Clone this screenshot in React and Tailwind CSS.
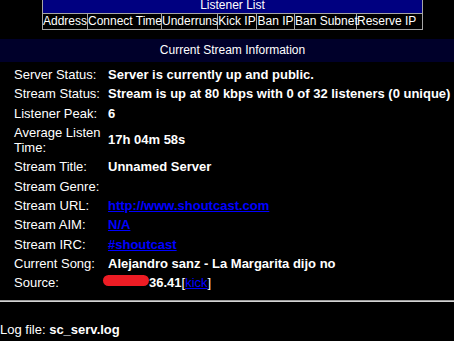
import React from 'react';

const columns = [
  { label: 'Address', w: 'w-[45px]' },
  { label: 'Connect Time', w: 'w-[74px]' },
  { label: 'Underruns', w: 'w-[56px]' },
  { label: 'Kick IP', w: 'w-[39px]' },
  { label: 'Ban IP', w: 'w-[38px]' },
  { label: 'Ban Subnet', w: 'w-[62px]' },
  { label: 'Reserve IP', w: 'w-[59px]' },
];

function Link({ children, bold = true }) {
  return (
    <a href="#" className={`text-[#0000ff] underline ${bold ? 'font-bold' : 'font-normal'}`}>
      {children}
    </a>
  );
}

// one label / value pair of the stream info table
function InfoRow({ label, children }) {
  return (
    <>
      <div className="pt-[2px] pb-[2.33px] pr-1 flex items-center">{label}</div>
      <div className="pt-[2px] pb-[2.33px] flex items-center font-bold whitespace-nowrap">{children}</div>
    </>
  );
}

export default function App() {
  return (
    <div className="w-full h-[341px] overflow-hidden bg-black text-white font-['Liberation_Sans',Arial,sans-serif]">
      <div className="w-[465px]">
        {/* Listener List */}
        <div className="mt-[-3px] mx-auto w-[381px] border border-[#a6a6a6] text-[12px] leading-[15px]">
          <div className="bg-[#000080] text-center border-b border-[#a6a6a6]">Listener List</div>
          <div className="flex">
            {columns.map((c, i) => (
              <div
                key={c.label}
                className={`${c.w} shrink-0 text-center whitespace-nowrap overflow-visible ${
                  i < columns.length - 1 ? 'border-r border-[#a6a6a6]' : ''
                }`}
              >
                {c.label}
              </div>
            ))}
          </div>
        </div>

        {/* Current Stream Information header */}
        <div className="mt-[9px] h-[23px] bg-[#00002a] flex items-center justify-center text-[12px] leading-[15px]">
          Current Stream Information
        </div>

        <div className="mt-[3px] pl-[14px] grid grid-cols-[94px_1fr] text-[13px] leading-[15px]">
          <InfoRow label="Server Status:">Server is currently up and public.</InfoRow>
          <InfoRow label="Stream Status:">Stream is up at 80 kbps with 0 of 32 listeners (0 unique)</InfoRow>
          <InfoRow label="Listener Peak:">6</InfoRow>
          <InfoRow label="Average Listen Time:">17h 04m 58s</InfoRow>
          <InfoRow label="Stream Title:">Unnamed Server</InfoRow>
          <InfoRow label="Stream Genre:"></InfoRow>
          <InfoRow label="Stream URL:">
            <Link>http://www.shoutcast.com</Link>
          </InfoRow>
          <InfoRow label="Stream AIM:">
            <Link>N/A</Link>
          </InfoRow>
          <InfoRow label="Stream IRC:">
            <Link>#shoutcast</Link>
          </InfoRow>
          <InfoRow label="Current Song:">Alejandro sanz - La Margarita dijo no</InfoRow>
          <InfoRow label="Source:">
            <span>
              <span className="inline-block ml-[-5px] w-[46px] h-[11px] rounded-full bg-[#ed1c24] align-[1px]"></span>
              36.41
              <span className="font-normal">[</span>
              <Link bold={false}>kick</Link>
              <span className="font-normal">]</span>
            </span>
          </InfoRow>
        </div>

        <div className="mt-[7px] h-[2px] border-t border-[#9c9c9c] border-b border-b-[#d4d4d4]"></div>

        <div className="mt-[20px] text-[13px] leading-[15px]">
          Log file: <span className="font-bold">sc_serv.log</span>
        </div>
      </div>
    </div>
  );
}
